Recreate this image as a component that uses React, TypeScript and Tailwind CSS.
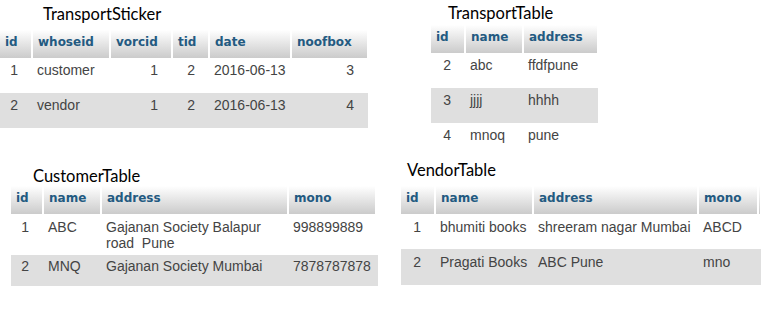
type Col = {
  label: string;
  width: string;
  num?: boolean;
};

type Row = {
  cells: string[];
  height: string;
  pad: string;
};

type TableProps = {
  title: string;
  titleClass: string;
  headClass: string;
  width: string;
  cols: Col[];
  rows: Row[];
};

const titleFont = "font-['Lato','Liberation_Sans',sans-serif]";
const headFont = "font-['DejaVu_Sans',Verdana,sans-serif]";
const bodyFont = "font-['Liberation_Sans',Arial,sans-serif]";

function DbTable({ title, titleClass, headClass, width, cols, rows }: TableProps) {
  return (
    <div className={width}>
      <div className={`${titleClass} ${titleFont} text-[16.5px] leading-5 text-black`}>{title}</div>
      <table className={`${headClass} ${width} table-fixed border-collapse`}>
        <colgroup>
          {cols.map((c, i) => (
            <col key={i} className={c.width} />
          ))}
        </colgroup>
        <thead>
          <tr className="h-[28px]">
            {cols.map((c, i) => (
              <th
                key={i}
                className={`p-0 pl-[5px] pt-[4px] align-top text-left whitespace-nowrap border-r-2 border-white bg-linear-to-b from-white to-[#cbcbcb] ${headFont} text-[12px] leading-4 font-bold text-[#235a81]`}
              >
                {c.label}
              </th>
            ))}
          </tr>
        </thead>
        <tbody>
          {rows.map((r, ri) => (
            <tr key={ri} className={`${r.height} ${ri % 2 === 1 ? "bg-[#dfdfdf]" : "bg-white"}`}>
              {cols.map((c, ci) => (
                <td
                  key={ci}
                  className={`p-0 ${r.pad} align-top ${bodyFont} text-[14px] leading-4 text-[#444] ${
                    c.num ? "text-right pr-[14px]" : "text-left pl-[5px]"
                  }`}
                >
                  {(r.cells[ci] ?? "").split("\n").map((line, li) => (
                    <span key={li} className="block whitespace-pre">
                      {line}
                    </span>
                  ))}
                </td>
              ))}
            </tr>
          ))}
        </tbody>
      </table>
    </div>
  );
}

const stickerCols: Col[] = [
  { label: "id", width: "w-[32px]", num: true },
  { label: "whoseid", width: "w-[78px]" },
  { label: "vorcid", width: "w-[62px]", num: true },
  { label: "tid", width: "w-[37px]", num: true },
  { label: "date", width: "w-[82px]" },
  { label: "noofbox", width: "w-[77px]", num: true },
];

const stickerRows: Row[] = [
  { cells: ["1", "customer", "1", "2", "2016-06-13", "3"], height: "h-[35px]", pad: "pt-[4px]" },
  { cells: ["2", "vendor", "1", "2", "2016-06-13", "4"], height: "h-[35px]", pad: "pt-[4px]" },
];

const transportCols: Col[] = [
  { label: "id", width: "w-[34px]", num: true },
  { label: "name", width: "w-[58px]" },
  { label: "address", width: "w-[75px]" },
];

const transportRows: Row[] = [
  { cells: ["2", "abc", "ffdfpune"], height: "h-[35px]", pad: "pt-[4px]" },
  { cells: ["3", "jjjj", "hhhh"], height: "h-[35px]", pad: "pt-[4px]" },
  { cells: ["4", "mnoq", "pune"], height: "h-[35px]", pad: "pt-[4px]" },
];

const customerCols: Col[] = [
  { label: "id", width: "w-[32px]", num: true },
  { label: "name", width: "w-[58px]" },
  { label: "address", width: "w-[187px]" },
  { label: "mono", width: "w-[88px]" },
  { label: "", width: "w-[2px]" },
];

const customerRows: Row[] = [
  {
    cells: ["1", "ABC", "Gajanan Society Balapur\nroad  Pune", "998899889"],
    height: "h-[41px]",
    pad: "pt-[5px]",
  },
  { cells: ["2", "MNQ", "Gajanan Society Mumbai", "7878787878"], height: "h-[31px]", pad: "pt-[3px]" },
];

const vendorCols: Col[] = [
  { label: "id", width: "w-[34px]", num: true },
  { label: "name", width: "w-[98px]" },
  { label: "address", width: "w-[165px]" },
  { label: "mono", width: "w-[60px]" },
  { label: "", width: "w-[3px]" },
];

const vendorRows: Row[] = [
  { cells: ["1", "bhumiti books", "shreeram nagar Mumbai", "ABCD"], height: "h-[35px]", pad: "pt-[5px]" },
  { cells: ["2", "Pragati Books", "ABC Pune", "mno"], height: "h-[36px]", pad: "pt-[5px]" },
];

export default function App() {
  return (
    <div className="w-[771px] h-[311px] bg-white overflow-hidden flex flex-col">
      <div className="h-[150px] flex overflow-hidden">
        <DbTable
          title="TransportSticker"
          titleClass="pl-[43px] pt-[4px]"
          headClass="mt-[6px]"
          width="w-[368px]"
          cols={stickerCols}
          rows={stickerRows}
        />
        <div className="ml-[63px]">
          <DbTable
            title="TransportTable"
            titleClass="pl-[17px] pt-[3px]"
            headClass="mt-[2px]"
            width="w-[167px]"
            cols={transportCols}
            rows={transportRows}
          />
        </div>
      </div>
      <div className="flex">
        <div className="ml-[11px]">
          <DbTable
            title="CustomerTable"
            titleClass="pl-[22px] pt-[16px]"
            headClass="mt-0"
            width="w-[367px]"
            cols={customerCols}
            rows={customerRows}
          />
        </div>
        <div className="ml-[23px]">
          <DbTable
            title="VendorTable"
            titleClass="pl-[6px] pt-[10px]"
            headClass="mt-[6px]"
            width="w-[360px]"
            cols={vendorCols}
            rows={vendorRows}
          />
        </div>
      </div>
    </div>
  );
}
